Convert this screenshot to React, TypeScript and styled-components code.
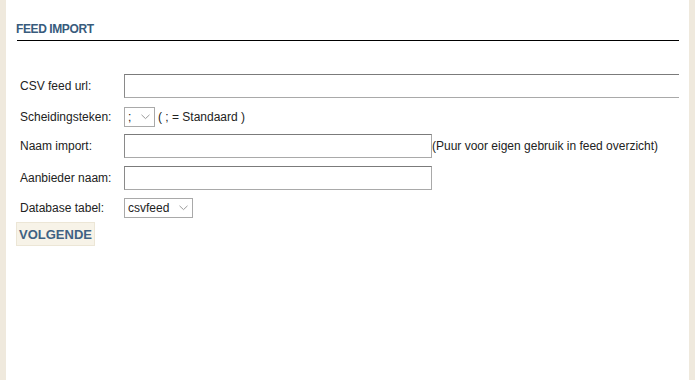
import React from "react";
import styled, { createGlobalStyle } from "styled-components";

const GlobalStyle = createGlobalStyle`
  html, body {
    margin: 0;
    padding: 0;
    background: #efe9dd;
  }
  body {
    font-family: "Liberation Sans", Arial, sans-serif;
  }
`;

const Page = styled.div`
  display: flex;
  height: 380px;
  padding: 0 6px;
`;

const Panel = styled.div`
  flex: 1;
  background: #ffffff;
  padding: 22px 10px 0 10px;
`;

const Content = styled.div`
  width: 663px;
  overflow: hidden;
`;

const Title = styled.h2`
  margin: 0 0 0 1px;
  padding: 0 0 4px 0;
  font-size: 12px;
  line-height: 14px;
  font-weight: bold;
  letter-spacing: -0.4px;
  color: #385b7c;
  border-bottom: 1px solid #000;
  text-indent: -1px;
`;

const Form = styled.form`
  display: flex;
  flex-direction: column;
  padding: 33px 0 0 4px;
`;

const Row = styled.div<{ $gap: number }>`
  display: flex;
  align-items: center;
  margin-bottom: ${(p) => p.$gap}px;
  font-size: 12px;
  color: #222;
`;

const Label = styled.label`
  width: 104px;
  flex-shrink: 0;
`;

const TextInput = styled.input<{ $width: number }>`
  box-sizing: border-box;
  width: ${(p) => p.$width}px;
  height: 24px;
  flex-shrink: 0;
  margin: 0;
  padding: 2px 4px;
  border: 1px solid #a9a9a9;
  border-top-color: #7b7b7b;
  border-left-color: #8a8a8a;
  font: 12px "Liberation Sans", Arial, sans-serif;
  background: #fff;
`;

const SelectBox = styled.div<{ $width: number }>`
  position: relative;
  width: ${(p) => p.$width}px;
  height: 20px;
  flex-shrink: 0;
`;

const Select = styled.select`
  box-sizing: border-box;
  appearance: none;
  width: 100%;
  height: 100%;
  margin: 0;
  padding: 0 0 0 3px;
  border: 1px solid #a9a9a9;
  border-radius: 0;
  background: #fff;
  color: #222;
  font: 12px "Liberation Sans", Arial, sans-serif;
`;

const Chevron = styled.svg`
  position: absolute;
  right: 5px;
  top: 7px;
  pointer-events: none;
`;

const Note = styled.span<{ $pad: number }>`
  padding-left: ${(p) => p.$pad}px;
  white-space: nowrap;
`;

const Button = styled.button`
  align-self: flex-start;
  margin: 0 0 0 -4px;
  height: 24px;
  padding: 0 2px;
  background: #f7f3e8;
  border: 1px solid #ece6d6;
  color: #3f6283;
  font: bold 13px "Liberation Sans", Arial, sans-serif;
`;

const Arrow = () => (
  <Chevron width="9" height="6" viewBox="0 0 9 6">
    <path d="M0.5 0.8 L4.5 4.6 L8.5 0.8" fill="none" stroke="#9a9a9a" strokeWidth="1" />
  </Chevron>
);

export default function App() {
  return (
    <>
      <GlobalStyle />
      <Page>
        <Panel>
          <Content>
            <Title>FEED IMPORT</Title>
            <Form onSubmit={(e) => e.preventDefault()}>
              <Row $gap={9}>
                <Label>CSV feed url:</Label>
                <TextInput $width={600} type="text" />
              </Row>
              <Row $gap={7}>
                <Label>Scheidingsteken:</Label>
                <SelectBox $width={31}>
                  <Select defaultValue=";">
                    <option value=";">;</option>
                    <option value=",">,</option>
                  </Select>
                  <Arrow />
                </SelectBox>
                <Note $pad={3}>( ; = Standaard )</Note>
              </Row>
              <Row $gap={8}>
                <Label>Naam import:</Label>
                <TextInput $width={308} type="text" />
                <Note $pad={0}>(Puur voor eigen gebruik in feed overzicht)</Note>
              </Row>
              <Row $gap={8}>
                <Label>Aanbieder naam:</Label>
                <TextInput $width={308} type="text" />
              </Row>
              <Row $gap={4}>
                <Label>Database tabel:</Label>
                <SelectBox $width={69}>
                  <Select defaultValue="csvfeed">
                    <option value="csvfeed">csvfeed</option>
                  </Select>
                  <Arrow />
                </SelectBox>
              </Row>
              <Button type="submit">VOLGENDE</Button>
            </Form>
          </Content>
        </Panel>
      </Page>
    </>
  );
}
